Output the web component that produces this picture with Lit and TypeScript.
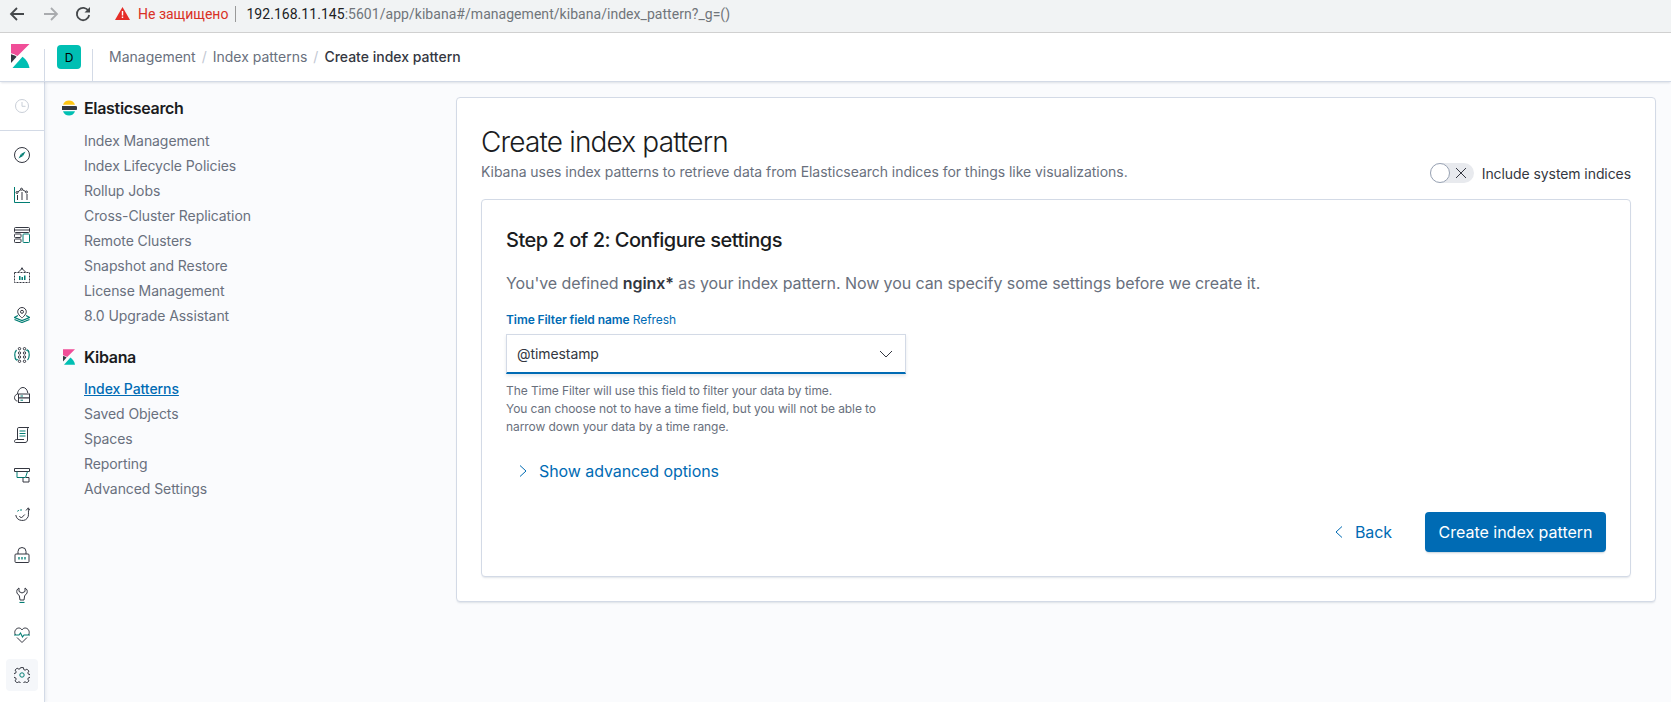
import { LitElement, css, html, svg } from "lit";
import { customElement } from "lit/decorators.js";

const DARK = "#343741";
const TEAL = "#017d73";

const railIcons = [
  // discover
  svg`<circle cx="8" cy="8" r="7.5" fill="none" stroke="${DARK}"/><path d="M11.500 4.500 9 9 6.900 6.900z" fill="${TEAL}"/><path d="M4.500 11.500 6.900 7 9 9z" fill="${TEAL}"/>`,
  // visualize
  svg`<path d="M.5 0v15.500H16" fill="none" stroke="${TEAL}"/><path d="M3 5.500 7.500 2.200l5 2.800" fill="none" stroke="${DARK}"/><circle cx="3" cy="5.500" r="1" fill="#fff" stroke="${DARK}"/><circle cx="7.500" cy="2.200" r="1" fill="#fff" stroke="${DARK}"/><circle cx="12.500" cy="5" r="1" fill="#fff" stroke="${DARK}"/><path d="M3.500 8v5M8 5v8M13 7v6" stroke="${DARK}" fill="none"/>`,
  // dashboard
  svg`<rect x=".5" y=".5" width="15" height="5" rx="1" fill="none" stroke="${DARK}"/><path d="M.5 3h15" stroke="${DARK}"/><rect x=".5" y="7" width="6.500" height="3.500" rx=".8" fill="none" stroke="${DARK}"/><rect x=".5" y="12" width="6.500" height="3.500" rx=".8" fill="none" stroke="${DARK}"/><rect x="9" y="7" width="6.500" height="8.500" rx=".8" fill="none" stroke="${TEAL}"/>`,
  // canvas
  svg`<path d="M.5 5.500h15v10H.5z" fill="none" stroke="${DARK}" stroke-dasharray="2 1"/><path d="M4 5.500 8 1.500l4 4" fill="none" stroke="${DARK}"/><circle cx="8" cy="1.500" r="1" fill="${DARK}"/><path d="M5 9v4h1.500V9zM7.500 10v3H9v-3zM10 8.500V13h1.500V8.500z" fill="${TEAL}"/>`,
  // maps
  svg`<path d="M8 .5a4.300 4.300 0 0 0-4.300 4.300C3.700 7.500 8 11 8 11s4.300-3.500 4.300-6.200A4.300 4.300 0 0 0 8 .5z" fill="none" stroke="${DARK}"/><circle cx="8" cy="4.800" r="1.500" fill="none" stroke="${DARK}"/><path d="M4 8.500.5 10.500 8 13.500l7.500-3-3.500-2M.5 12.500 8 15.500l7.500-3" fill="none" stroke="${TEAL}" stroke-width="1.200"/>`,
  // ml
  svg`<g fill="none" stroke="${DARK}"><circle cx="5.500" cy="1.700" r="1.200"/><circle cx="10.500" cy="1.700" r="1.200"/><circle cx="5.500" cy="6" r="1.200"/><circle cx="10.500" cy="6" r="1.200"/><circle cx="5.500" cy="10" r="1.200"/><circle cx="10.500" cy="10" r="1.200"/><circle cx="5.500" cy="14.300" r="1.200"/><circle cx="10.500" cy="14.300" r="1.200"/></g><path d="M2.500 3C.2 5.500.2 10.500 2.500 13M13.500 3c2.300 2.500 2.300 7.500 0 10" fill="none" stroke="${TEAL}" stroke-width="1.200"/><path d="M1 11.500l1.500 1.800 1.800-1M15 4.500 13.500 2.700l-1.800 1" fill="none" stroke="${TEAL}"/>`,
  // infra
  svg`<path d="M3.500 14C1.500 14 .5 12.300 .5 10.700 .5 8.800 1.800 7.500 3.300 7.300 3.800 3.300 6.300.5 9 .5c2.300 0 4.300 2 4.800 5.500" fill="none" stroke="${DARK}"/><rect x="4.500" y="7" width="11" height="4" fill="#fff" stroke="${DARK}"/><rect x="4.500" y="11" width="11" height="4.500" fill="#fff" stroke="${DARK}"/><path d="M6.500 9h2.500M6.500 13.200h2.500" stroke="${TEAL}"/>`,
  // logs
  svg`<path d="M3.500 12V1.800C3.500 1 4 .5 4.800.5H15c-.8 0-1.500.6-1.500 1.500v11c0 1.400-1 2.500-2.500 2.500H1.500C.8 15.500.5 15 .5 14.300c0-1 .8-1.800 1.800-1.800H10" fill="none" stroke="${DARK}"/><path d="M5.500 4h6M5.500 6.500h6M5.500 9h6" stroke="${TEAL}"/>`,
  // apm
  svg`<path d="M.5 1.500h15v3H.5z" fill="none" stroke="${DARK}"/><path d="M3 4.500v6h8.500l2-6" fill="none" stroke="${TEAL}"/><path d="M9 10.500v4.500h6v-4.500h-3" fill="none" stroke="${DARK}"/>`,
  // uptime
  svg`<path d="M3.300 4.300A6.500 6.500 0 0 1 8 3" fill="none" stroke="${TEAL}" stroke-dasharray="2 1"/><path d="M1.800 8A6.500 6.500 0 0 0 14.200 9.500c.4-2 .3-5 .1-8" fill="none" stroke="${DARK}"/><path d="m12 3.500 2.300-2.700L16 3.500" fill="none" stroke="${DARK}"/><path d="m5.300 9 2 2 3.500-3.500" fill="none" stroke="${DARK}"/>`,
  // security
  svg`<path d="M4 7V4.500a4 4 0 0 1 8 0V7" fill="none" stroke="${DARK}"/><rect x="1" y="7" width="14" height="8.500" rx="1" fill="none" stroke="${DARK}"/><path d="M5 10v2.500M8 10v2.500M11 10v2.500" stroke="${TEAL}" stroke-width="1.300"/>`,
  // dev tools
  svg`<path d="M5 1C3 2 2.300 4 3 6c.5 1.300 1.500 2 2.300 2.500L6 13h4l.7-4.500C11.500 8 12.500 7.300 13 6c.7-2 0-4-2-5v3.500L8 6 5 4.500z" fill="none" stroke="${DARK}"/><path d="M5.500 15.500h5" stroke="${TEAL}" stroke-width="1.200"/>`,
  // monitoring
  svg`<path d="M1.500 8C-.5 4.500 2 1 4.800 1 6.300 1 7.300 1.800 8 3c.7-1.200 1.700-2 3.200-2 2.800 0 5.300 3.500 3.300 7M3 10.500l5 5 5-5" fill="none" stroke="${DARK}"/><path d="M0 8h5l1.500-2 2 4 1.500-2h6" fill="none" stroke="${TEAL}" stroke-width="1.100"/>`,
  // management
  svg`<path d="M6.600.6h2.800l.4 2 1.300.6 1.800-1.100 2 2-1.100 1.800.6 1.300 2 .4v2.800l-2 .4-.6 1.300 1.100 1.800-2 2-1.800-1.100-1.300.6-.4 2H6.600l-.4-2-1.300-.6-1.800 1.100-2-2 1.100-1.800-.6-1.300-2-.4V6.600l2-.4.6-1.300-1.100-1.800 2-2 1.800 1.100 1.300-.6z" fill="none" stroke="${DARK}"/><circle cx="8" cy="8" r="2.200" fill="none" stroke="${TEAL}"/>`,
];

const esLinks = ["Index Management", "Index Lifecycle Policies", "Rollup Jobs", "Cross-Cluster Replication", "Remote Clusters", "Snapshot and Restore", "License Management", "8.0 Upgrade Assistant"];
const kbLinks = ["Index Patterns", "Saved Objects", "Spaces", "Reporting", "Advanced Settings"];

const kibanaLogo = (w: number, h: number) => html`<svg width=${w} height=${h} viewBox="0 0 18.500 24">
  <path d="M0 0h18.500L6.500 12C4.500 10.700 2.300 9.700 0 9.200z" fill="#f04e98"/>
  <path d="M0 10.300c2 .4 3.900 1.200 5.600 2.500L0 19z" fill="#343741"/>
  <path d="M1.500 24 11.500 12.800c3.800 2.700 6.300 6.600 7 11.200z" fill="#00bfb3"/>
</svg>`;

@customElement("app-root")
export class AppRoot extends LitElement {
  render() {
    return html`
      <div class="page">
        <div class="chrome">
          <svg class="back-ic" width="16" height="16" viewBox="0 0 16 16"><path d="M15 8H2M8 2 2 8l6 6" fill="none" stroke="#45484b" stroke-width="1.800"/></svg>
          <svg class="fwd-ic" width="16" height="16" viewBox="0 0 16 16"><path d="M1 8h13M8 2l6 6-6 6" fill="none" stroke="#a9abae" stroke-width="1.800"/></svg>
          <svg class="reload-ic" width="16" height="16" viewBox="0 0 16 16"><path d="M13.500 5A6.200 6.200 0 1 0 14.200 9" fill="none" stroke="#45484b" stroke-width="1.800"/><path d="M15 1v5.500H9.500z" fill="#45484b"/></svg>
          <div class="omni">
            <svg width="15" height="13" viewBox="0 0 15 13"><path d="M7.500 0 15 13H0z" fill="#e52d27"/><path d="M6.800 4h1.400v4.500H6.800zM6.800 9.500h1.400V11H6.800z" fill="#fff"/></svg>
            <span class="warn">Не защищено</span>
            <span class="sep"></span>
            <span class="url"><b>192.168.11.145</b>:5601/app/kibana#/management/kibana/index_pattern?_g=()</span>
          </div>
        </div>

        <header class="top">
          <div class="logo-cell">${kibanaLogo(18.5, 24)}</div>
          <div class="space-cell"><span class="avatar">D</span></div>
          <nav class="crumbs">
            <span>Management</span><i>/</i><span>Index patterns</span><i>/</i><span class="now">Create index pattern</span>
          </nav>
        </header>

        <div class="body">
          <aside class="rail">
            <div class="recent">
              <svg width="16" height="16" viewBox="0 0 16 16"><circle cx="8" cy="8" r="6.500" fill="none" stroke="#c9cfd8"/><path d="M8 4v4.300h3.500" fill="none" stroke="#c9cfd8"/></svg>
            </div>
            ${railIcons.map(
              (ic, i) => html`<div class="rail-item ${i === railIcons.length - 1 ? "active" : ""}">
                <span><svg width="16" height="16" viewBox="0 0 16 16">${ic}</svg></span>
              </div>`
            )}
          </aside>

          <div class="sidenav">
            <div class="group-title">
              <svg width="16" height="16" viewBox="0 0 16 16">
                <path d="M2 4.800C2.800 2 5.200.5 8 .5s5.200 1.500 6 4.300z" fill="#fec514"/>
                <path d="M1 6h13.500a2 2 0 0 1 0 4H1z" fill="#343741"/>
                <path d="M2 11.200h12c-.8 2.800-3.200 4.300-6 4.300s-5.200-1.500-6-4.300z" fill="#00bfb3"/>
              </svg>
              Elasticsearch
            </div>
            ${esLinks.map((l) => html`<a class="link">${l}</a>`)}
            <div class="group-title second">
              <span class="mini-logo">${kibanaLogo(12, 16)}</span>
              Kibana
            </div>
            ${kbLinks.map((l, i) => html`<a class="link ${i === 0 ? "sel" : ""}">${l}</a>`)}
          </div>

          <main class="main">
            <section class="panel">
              <h1>Create index pattern</h1>
              <div class="sub-row">
                <p class="sub">Kibana uses index patterns to retrieve data from Elasticsearch indices for things like visualizations.</p>
                <div class="switch-row">
                  <span class="switch">
                    <span class="knob"></span>
                    <svg width="12" height="12" viewBox="0 0 12 12"><path d="m1 1 10 10M11 1 1 11" stroke="#343741" fill="none"/></svg>
                  </span>
                  <span>Include system indices</span>
                </div>
              </div>

              <section class="inner">
                <h2>Step 2 of 2: Configure settings</h2>
                <p class="lead">You've defined <b>nginx*</b> as your index pattern. Now you can specify some settings before we create it.</p>
                <div class="label"><b>Time Filter field name</b> Refresh</div>
                <div class="select">
                  <span>@timestamp</span>
                  <svg width="14" height="8" viewBox="0 0 14 8"><path d="m1 1 6 6 6-6" fill="none" stroke="#343741"/></svg>
                </div>
                <div class="help">
                  The Time Filter will use this field to filter your data by time.<br />
                  You can choose not to have a time field, but you will not be able to<br />
                  narrow down your data by a time range.
                </div>
                <div class="advanced">
                  <svg width="8" height="12" viewBox="0 0 8 12"><path d="m1 .5 6 5.500-6 5.500" fill="none" stroke="#006bb4"/></svg>
                  <span>Show advanced options</span>
                </div>
                <div class="actions">
                  <a class="back">
                    <svg width="8" height="12" viewBox="0 0 8 12"><path d="M7 .5 1 6l6 5.500" fill="none" stroke="#006bb4"/></svg>
                    Back
                  </a>
                  <button class="primary">Create index pattern</button>
                </div>
              </section>
            </section>
          </main>
        </div>
      </div>
    `;
  }

  static styles = css`
    :host {
      display: block;
      font-family: Inter, "Liberation Sans", sans-serif;
      color: #343741;
      letter-spacing: -0.005em;
    }

    .page {
      height: 702px;
      display: flex;
      flex-direction: column;
      overflow: hidden;
      background: #fafbfd;
    }

    .chrome {
      height: 27px;
      flex: none;
      padding-bottom: 5px;
      display: flex;
      align-items: center;
      background: #f1f3f4;
      border-bottom: 1px solid #d0d0d0;
      letter-spacing: 0;
    }

    .back-ic {
      margin-left: 9px;
    }

    .fwd-ic {
      margin-left: 18px;
    }

    .reload-ic {
      margin-left: 16px;
    }

    .omni {
      margin-left: 24px;
      display: flex;
      align-items: center;
      font-family: Roboto, sans-serif;
      font-size: 14px;
      white-space: nowrap;
    }

    .warn {
      color: #d93025;
      margin-left: 8px;
    }

    .sep {
      width: 1px;
      height: 16px;
      background: #999;
      margin: 0 10px 0 7px;
    }

    .url {
      color: #70757a;
      letter-spacing: 0.04px;
    }

    .url b {
      color: #202124;
      font-weight: 400;
    }

    .top {
      height: 48px;
      flex: none;
      display: flex;
      align-items: stretch;
      background: #fff;
      border-bottom: 1px solid #d3dae6;
      box-shadow: 0 2px 2px -1px rgba(152, 162, 179, 0.3);
      position: relative;
      z-index: 1;
    }

    .logo-cell,
    .space-cell {
      position: relative;
      box-sizing: border-box;
    }

    .logo-cell::after,
    .space-cell::after {
      content: "";
      position: absolute;
      right: 0;
      top: 16px;
      bottom: 0;
      width: 1px;
      background: #d3dae6;
    }

    .logo-cell {
      width: 45px;
      padding: 11px 0 0 11px;
    }

    .space-cell {
      width: 48px;
      padding: 12px 0 0 12px;
    }

    .avatar {
      display: flex;
      width: 24px;
      height: 24px;
      border-radius: 4px;
      background: #00bfb3;
      color: #000;
      font-size: 12px;
      align-items: center;
      justify-content: center;
    }

    .crumbs {
      display: flex;
      align-items: center;
      padding: 0 0 2px 16px;
      font-size: 14px;
      color: #69707d;
      letter-spacing: 0;
    }

    .crumbs i {
      font-style: normal;
      color: #c2c8d3;
      margin: 0 6px;
    }

    .crumbs .now {
      color: #343741;
      font-weight: 500;
    }

    .body {
      flex: 1;
      display: flex;
      min-height: 0;
    }

    .rail {
      width: 45px;
      flex: none;
      box-sizing: border-box;
      background: #fff;
      border-right: 1px solid #d3dae6;
      box-shadow: 1px 0 3px rgba(152, 162, 179, 0.2);
    }

    .recent {
      height: 49px;
      display: flex;
      align-items: center;
      justify-content: center;
      border-bottom: 1px solid #d3dae6;
      margin-bottom: 4px;
      box-sizing: border-box;
    }

    .rail-item {
      height: 40px;
      display: flex;
      align-items: center;
      justify-content: center;
    }

    .rail-item span {
      width: 32px;
      height: 32px;
      display: flex;
      align-items: center;
      justify-content: center;
      border-radius: 4px;
    }

    .rail-item.active span {
      background: #f5f7fa;
    }

    .sidenav {
      width: 411px;
      flex: none;
      box-sizing: border-box;
      padding: 14px 0 0 16px;
      display: flex;
      flex-direction: column;
      align-items: flex-start;
    }

    .group-title {
      display: flex;
      align-items: center;
      gap: 7px;
      height: 24px;
      font-size: 16px;
      font-weight: 600;
      letter-spacing: -0.02em;
      color: #1a1c21;
      margin-bottom: 8px;
    }

    .group-title.second {
      margin-top: 17px;
      margin-bottom: 7px;
    }

    .mini-logo {
      display: flex;
      width: 16px;
      justify-content: center;
    }

    .link {
      height: 25px;
      line-height: 25px;
      padding-left: 23px;
      font-size: 14px;
      color: #69707d;
    }

    .link.sel {
      color: #006bb4;
      text-decoration: underline;
      font-weight: 500;
    }

    .main {
      flex: 1;
      min-width: 0;
      padding: 15px 15px 0 0;
    }

    .panel {
      box-sizing: border-box;
      height: 505px;
      background: #fff;
      border: 1px solid #d3dae6;
      border-radius: 4px;
      box-shadow: 0 2px 2px -1px rgba(152, 162, 179, 0.3);
      padding: 24px;
    }

    h1 {
      margin: 0;
      font-size: 28px;
      line-height: 40px;
      font-weight: 300;
      letter-spacing: -0.03em;
      color: #1a1c21;
    }

    .sub-row {
      display: flex;
      justify-content: space-between;
      align-items: flex-start;
      height: 37px;
    }

    .sub {
      margin: 0;
      font-size: 14px;
      line-height: 20px;
      color: #69707d;
      letter-spacing: -0.003em;
    }

    .switch-row {
      display: flex;
      align-items: center;
      gap: 8px;
      font-size: 14px;
      margin-top: 1px;
    }

    .switch {
      width: 44px;
      height: 20px;
      border-radius: 10px;
      background: #e8eaee;
      display: flex;
      align-items: center;
      position: relative;
      justify-content: flex-end;
      padding-right: 7px;
      box-sizing: border-box;
    }

    .knob {
      position: absolute;
      left: 0;
      top: 0;
      width: 20px;
      height: 20px;
      box-sizing: border-box;
      border-radius: 50%;
      background: #fff;
      border: 1px solid #98a2b3;
    }

    .inner {
      box-sizing: border-box;
      height: 378px;
      border: 1px solid #d3dae6;
      border-radius: 4px;
      background: #fff;
      box-shadow: 0 2px 2px -1px rgba(152, 162, 179, 0.3);
      padding: 24px;
      display: flex;
      flex-direction: column;
    }

    h2 {
      margin: 0;
      font-size: 20px;
      line-height: 32px;
      font-weight: 500;
      letter-spacing: -0.025em;
      color: #1a1c21;
    }

    .lead {
      margin: 15px 0 0;
      font-size: 16px;
      line-height: 24px;
      color: #69707d;
    }

    .lead b {
      color: #343741;
      font-weight: 600;
    }

    .label {
      margin-top: 16px;
      font-size: 12px;
      line-height: 18px;
      color: #006bb4;
    }

    .label b {
      font-weight: 600;
    }

    .select {
      margin-top: 5px;
      width: 400px;
      height: 40px;
      flex: none;
      box-sizing: border-box;
      border: 1px solid #d3dae6;
      border-bottom: 2px solid #006bb4;
      display: flex;
      align-items: center;
      justify-content: space-between;
      padding: 0 12px 0 10px;
      font-size: 14px;
      box-shadow: 0 2px 3px rgba(152, 162, 179, 0.25);
    }

    .help {
      margin-top: 8px;
      font-size: 12px;
      line-height: 18px;
      color: #69707d;
    }

    .advanced {
      margin-top: 23px;
      padding-left: 13px;
      display: flex;
      align-items: center;
      gap: 12px;
      font-size: 16px;
      line-height: 24px;
      color: #006bb4;
    }

    .actions {
      margin-top: auto;
      display: flex;
      justify-content: flex-end;
      align-items: center;
    }

    .back {
      display: flex;
      align-items: center;
      gap: 12px;
      font-size: 16px;
      color: #006bb4;
      margin-right: 33px;
    }

    .primary {
      width: 181px;
      height: 40px;
      border: 0;
      border-radius: 4px;
      background: #006bb4;
      color: #fff;
      font: 400 16px Inter, sans-serif;
      box-shadow: 0 2px 2px -1px rgba(54, 97, 126, 0.3);
    }
  `;
}
